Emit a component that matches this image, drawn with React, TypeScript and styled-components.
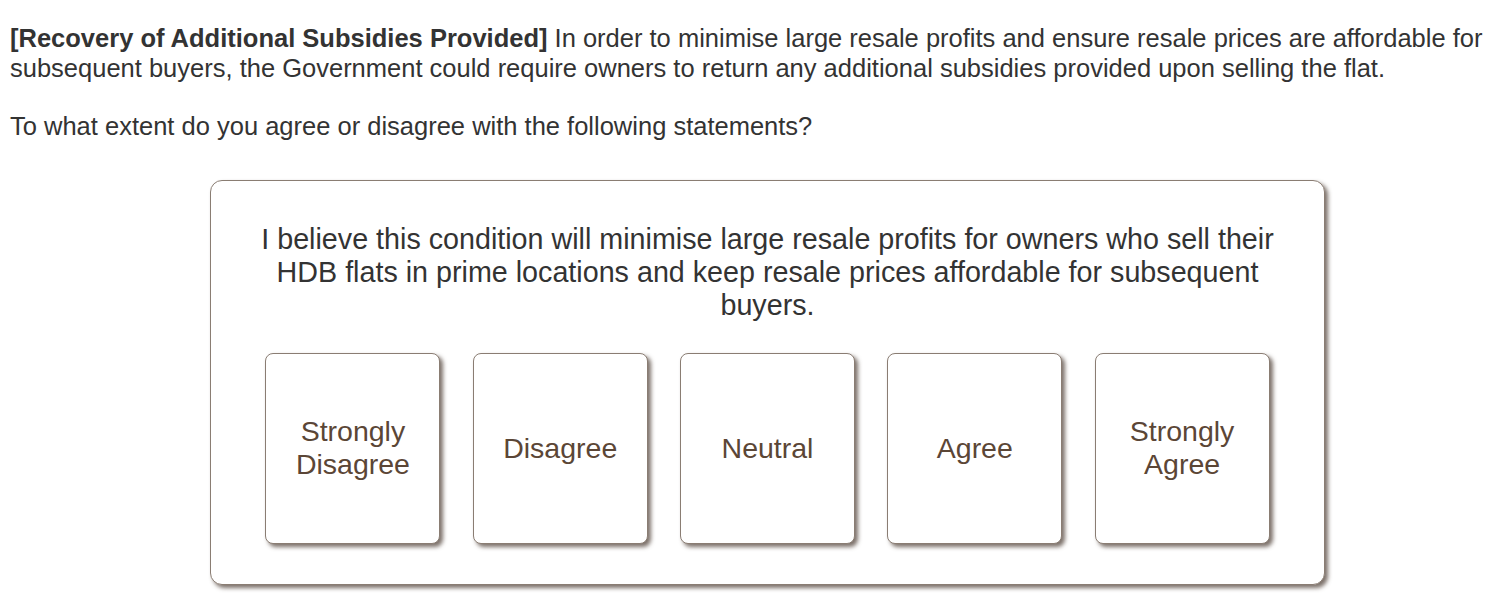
import styled, { createGlobalStyle } from "styled-components";

const options = ["Strongly Disagree", "Disagree", "Neutral", "Agree", "Strongly Agree"];

const GlobalStyle = createGlobalStyle`
  body {
    margin: 0;
    background: #ffffff;
    font-family: "Liberation Sans", Arial, sans-serif;
  }
`;

const App = () => {
  return (
    <Page>
      <GlobalStyle />
      <Intro>
        <strong>[Recovery of Additional Subsidies Provided]</strong> In order to minimise large
        resale profits and ensure resale prices are affordable for subsequent buyers, the
        Government could require owners to return any additional subsidies provided upon selling
        the flat.
      </Intro>
      <Intro>To what extent do you agree or disagree with the following statements?</Intro>
      <Card>
        <Statement>
          I believe this condition will minimise large resale profits for owners who sell their
          HDB flats in prime locations and keep resale prices affordable for subsequent buyers.
        </Statement>
        <Choices>
          {options.map((label) => (
            <Choice key={label} type="button">
              {label}
            </Choice>
          ))}
        </Choices>
      </Card>
    </Page>
  );
};

const Page = styled.div`
  padding: 24px 10px 20px 10px;
  color: #333333;
`;
const Intro = styled.p`
  margin: 0 0 29px 0;
  font-size: 25.5px;
  line-height: 29.5px;
  strong {
    font-weight: bold;
  }
`;
const Card = styled.div`
  box-sizing: border-box;
  width: 1115px;
  height: 405px;
  margin: 38px 0 0 200px;
  padding: 42px 40px 0 40px;
  border: 1px solid #8a7d73;
  border-radius: 12px;
  background: #ffffff;
  box-shadow: 3px 3px 4px rgba(80, 66, 56, 0.75);
`;
const Statement = styled.div`
  margin: 0 auto;
  max-width: 1030px;
  text-align: center;
  font-size: 28.7px;
  line-height: 33px;
  color: #333333;
`;
const Choices = styled.div`
  display: flex;
  justify-content: center;
  gap: 32.3px;
  margin-top: 31px;
`;
const Choice = styled.button`
  box-sizing: border-box;
  width: 175px;
  height: 191px;
  padding: 0 16px;
  border: 1px solid #8a7d73;
  border-radius: 8px;
  background: #ffffff;
  box-shadow: 3px 3px 4px rgba(80, 66, 56, 0.75);
  font-family: "Liberation Sans", Arial, sans-serif;
  font-size: 28.5px;
  line-height: 33px;
  color: #5b4636;
  cursor: pointer;
`;

export default App;
